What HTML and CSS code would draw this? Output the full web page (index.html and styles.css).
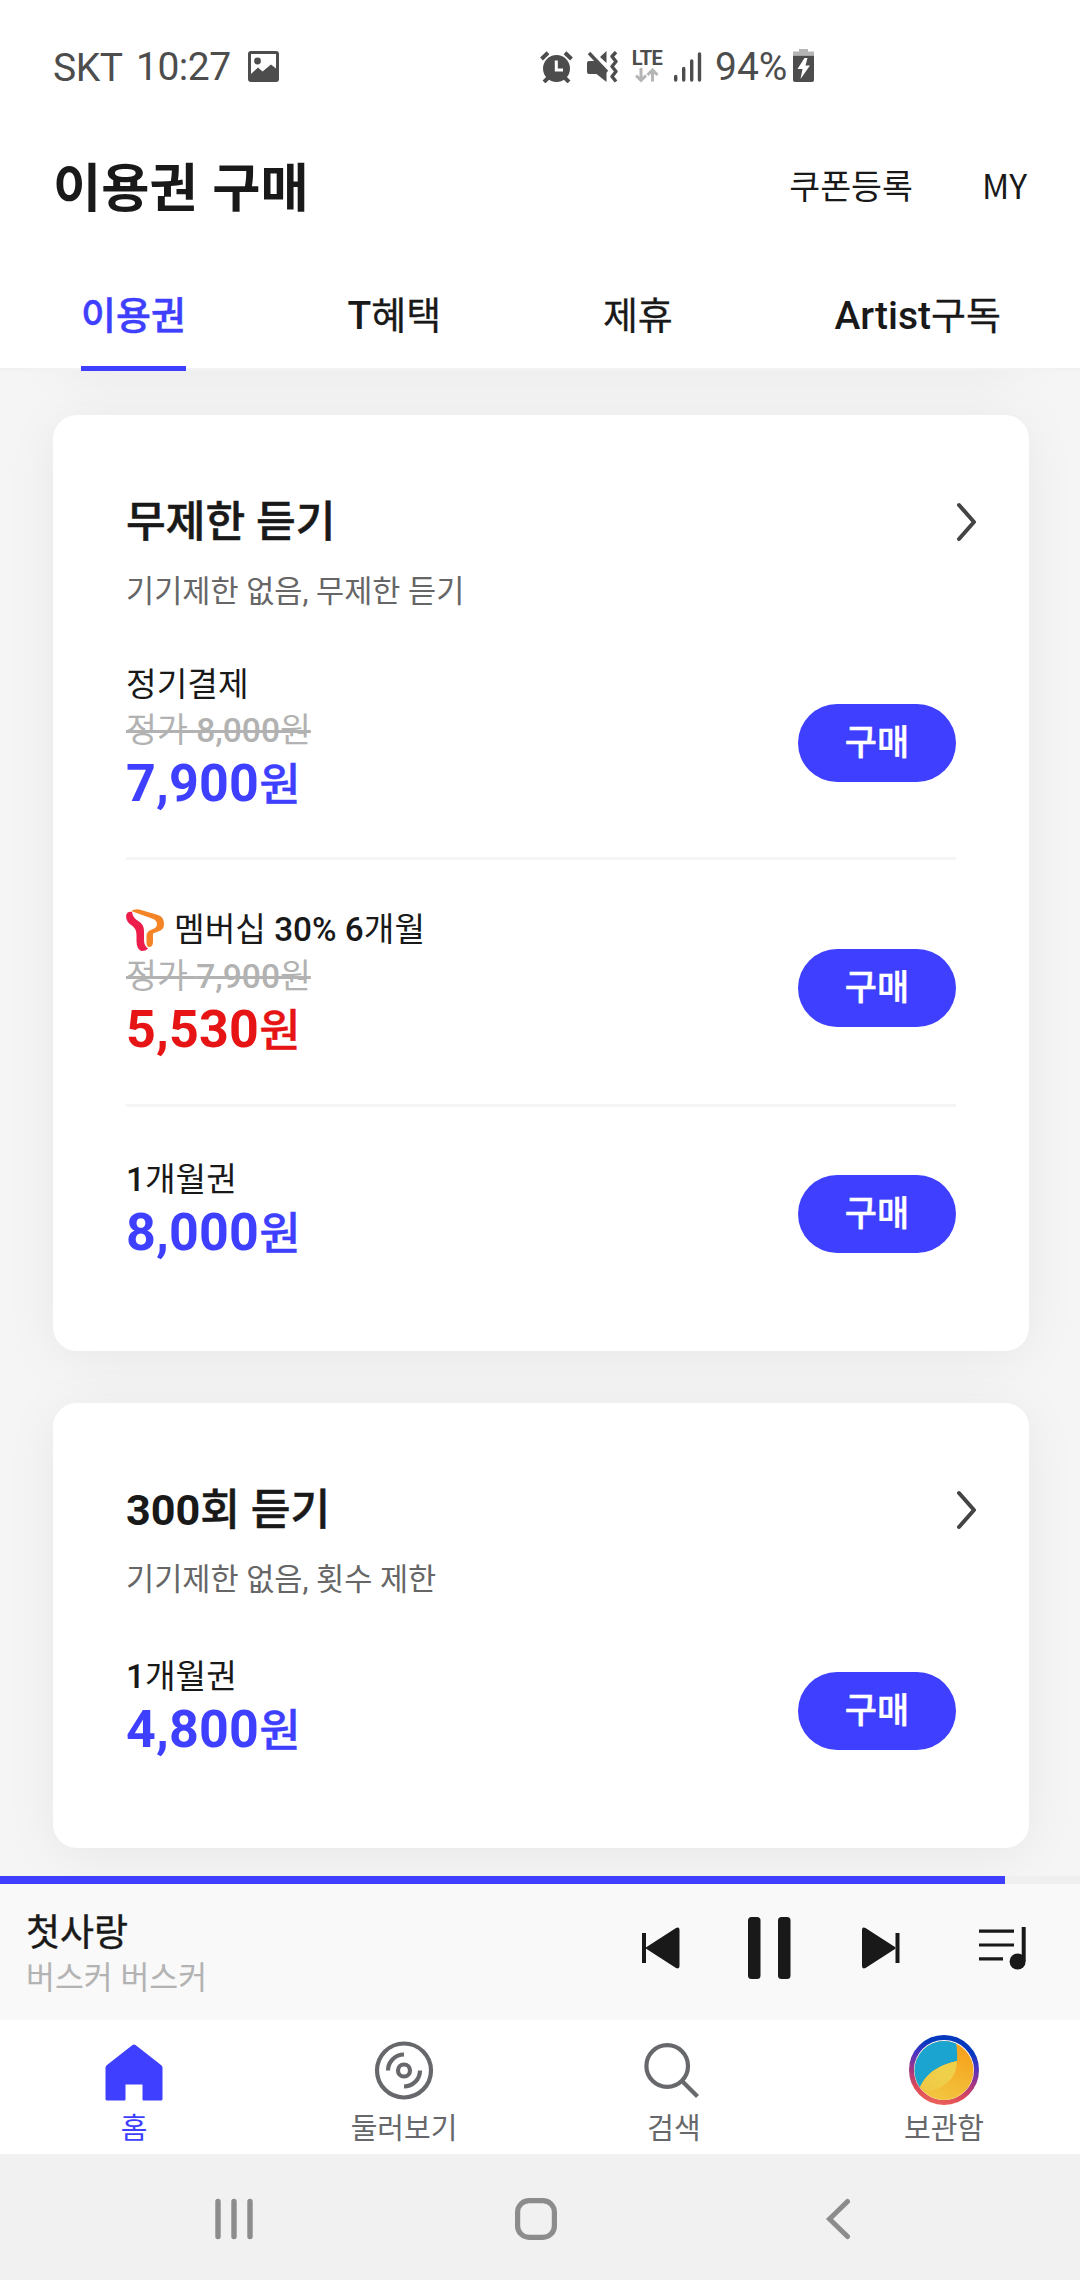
FILE: index.html
```html
<!DOCTYPE html>
<html lang="ko">
<head>
<meta charset="utf-8">
<title>이용권 구매</title>
<link rel="stylesheet" href="styles.css">
</head>
<body>
<div class="screen">
  <div class="status">
    <span class="status-text carrier">SKT</span>
    <span class="status-text clock">10:27</span>
    <svg class="ic-photo" width="32" height="31" viewBox="0 0 32 31"><path fill="#4d4d4d" fill-rule="evenodd" d="M3 0h25a3 3 0 0 1 3 3v25a3 3 0 0 1-3 3H3a3 3 0 0 1-3-3V3a3 3 0 0 1 3-3zM3 3v20l7-6.500 4.500 4L23 13.500l5 4V3z"/><circle cx="9.500" cy="10" r="3.400" fill="#4d4d4d"/></svg>
    <svg class="ic-alarm" width="34" height="32" viewBox="0 0 34 32"><g stroke="#4d4d4d" stroke-width="4" fill="none"><path d="M1.500 8L8 1.800M31.500 8L25 1.800M4 31l6-6M29 31l-6-6"/></g><circle cx="16.500" cy="17.500" r="13.500" fill="#4d4d4d"/><path d="M16.300 9.500v9.500h6.700" stroke="#fff" stroke-width="3" fill="none"/></svg>
    <svg class="ic-mute" width="32" height="32" viewBox="0 0 32 32"><g fill="#4d4d4d"><path d="M0 12q0-2 2-2h6L19.500 21V31L9.500 23H2q-2 0-2-2zM13 6l6.500-6v12z"/></g><path d="M2 2l18 19" stroke="#4d4d4d" stroke-width="3.400"/><path d="M29 1l-4 4.500 4 5-4 5 4 5-4 5 4 5" stroke="#4d4d4d" stroke-width="3.400" fill="none" stroke-linejoin="round"/></svg>
    <div class="lte"><span class="lte-text">LTE</span><svg width="24" height="15" viewBox="0 0 24 15"><path d="M6 0v12M1 7.500l5 5 5-5M17.500 13.500V2M12.500 7l5-5 5 5" stroke="#b5b5b5" stroke-width="3" fill="none"/></svg></div>
    <svg class="ic-signal" width="28" height="30" viewBox="0 0 28 30"><path d="M1.700 24.500v3.500M9.700 16.500v11.500M17.700 9v19M25.500 2v26" stroke="#4d4d4d" stroke-width="3.400" stroke-linecap="round"/></svg>
    <span class="status-text percent">94%</span>
    <svg class="ic-battery" width="22" height="34" viewBox="0 0 22 34"><path d="M6 0h9v2.500h6V6H0V2.500h6z" fill="#b5b5b5"/><path d="M0 6.500h21v24.500q0 2-2 2H2q-2 0-2-2z" fill="#4d4d4d"/><path d="M11.500 9L4.500 20h5L7.500 30 17 16.500h-4.500L14.500 9z" fill="#fff"/></svg>
  </div>
  <header class="header">
    <h1 class="title">이용권 구매</h1>
    <a class="link coupon">쿠폰등록</a>
    <a class="link">MY</a>
  </header>
  <nav class="tabs">
    <a class="tab active">이용권</a>
    <a class="tab"><span class="latin">T</span>혜택</a>
    <a class="tab">제휴</a>
    <a class="tab"><span class="latin">Artist</span>구독</a>
  </nav>
  <main class="list">
    <section class="card previous"></section>
    <section class="card unlimited">
      <div class="card-head"><h2 class="card-title">무제한 듣기</h2><svg class="chevron" width="22" height="40" viewBox="0 0 22 40"><path d="M3 3l15 17L3 37" fill="none" stroke="#444" stroke-width="4" stroke-linecap="round" stroke-linejoin="round"/></svg></div>
      <p class="desc">기기제한 없음, 무제한 듣기</p>
      <div class="plan first">
        <div class="info"><div class="label">정기결제</div><div class="was">정가 <span class="latin">8,000</span>원</div><div class="price">7,900<span class="won">원</span></div></div>
        <button class="buy">구매</button>
      </div>
      <div class="plan member">
        <div class="info"><div class="label"><svg class="t-logo" width="38" height="42" viewBox="0 0 38 42"><path d="M0 7Q1 2 6 3q1 6 5.500 8.500Q18 15 18 22v9q0 6 4 8.500-2 2.500-6.500 2.500-5-2-5-10v-6q0-6-4-9-6.500-4-6.500-10z" fill="#ec1c4b"/><path d="M5 2Q10-1 15 1l17 5q6 2 6 9 0 6-6 7.500l-5 2V33q0 5-4 5-2.500 0-2.500-5v-6q0-5 5.500-6.500 5-1.500 5-5.500 0-4-5-5.500z" fill="#f58426"/></svg><span>멤버십 <span class="latin">30% 6</span>개월</span></div><div class="was">정가 <span class="latin">7,900</span>원</div><div class="price sale">5,530<span class="won">원</span></div></div>
        <button class="buy">구매</button>
      </div>
      <div class="plan month">
        <div class="info"><div class="label"><span class="latin">1</span>개월권</div><div class="price">8,000<span class="won">원</span></div></div>
        <button class="buy">구매</button>
      </div>
    </section>
    <section class="card counted">
      <div class="card-head"><h2 class="card-title"><span class="count">300</span>회 듣기</h2><svg class="chevron" width="22" height="40" viewBox="0 0 22 40"><path d="M3 3l15 17L3 37" fill="none" stroke="#444" stroke-width="4" stroke-linecap="round" stroke-linejoin="round"/></svg></div>
      <p class="desc">기기제한 없음, 횟수 제한</p>
      <div class="plan single">
        <div class="info"><div class="label"><span class="latin">1</span>개월권</div><div class="price">4,800<span class="won">원</span></div></div>
        <button class="buy">구매</button>
      </div>
    </section>
  </main>
  <div class="progress"><div class="progress-fill"></div></div>
  <section class="player">
    <div class="track"><div class="song">첫사랑</div><div class="artist">버스커 버스커</div></div>
    <svg class="ic-prev" width="38" height="42" viewBox="0 0 38 42" fill="#191919"><path d="M0 6h4v30H0zM3 21L34 1q3.500-1.500 3.500 2v36q0 3.500-3.500 2z"/></svg>
    <svg class="ic-pause" width="43" height="62" viewBox="0 0 43 62" fill="#191919"><rect width="12.500" height="62" rx="3.500"/><rect x="30" width="12.500" height="62" rx="3.500"/></svg>
    <svg class="ic-next" width="38" height="42" viewBox="0 0 38 42" fill="#191919"><path d="M33.500 6h4v30h-4zM34.500 21L3.500 1Q0-.5 0 3v36q0 3.500 3.500 2z"/></svg>
    <svg class="ic-queue" width="47" height="43" viewBox="0 0 47 43"><path d="M0 4.200h35M0 18h35M0 31.800h24" stroke="#191919" stroke-width="3.200"/><path d="M44.700 0v34" stroke="#191919" stroke-width="4"/><circle cx="38.600" cy="34.500" r="8" fill="#191919"/></svg>
  </section>
  <nav class="bottom">
    <a class="item on"><svg width="70" height="70" viewBox="0 0 70 70"><path d="M33.500 10q1.500-1 3 0L62 30q1.500 1 1.500 2.500V64q0 1.500-1.500 1.500H44.500q-1 0-1-1V49.500h-17v15q0 1-1 1H8Q6.500 65.500 6.500 64V32.500Q6.500 31 8 30z" fill="#3f3fff"/></svg>홈</a>
    <a class="item"><svg width="70" height="70" viewBox="0 0 70 70"><g fill="none" stroke="#66686b" stroke-width="4.200"><circle cx="35" cy="35.500" r="27"/><circle cx="35" cy="35.500" r="6"/><path d="M19 35.500a16 16 0 0 1 16-16M51 35.500a16 16 0 0 1-16 16"/></g></svg>둘러보기</a>
    <a class="item"><svg width="70" height="70" viewBox="0 0 70 70"><g fill="none" stroke="#66686b" stroke-width="4.200"><circle cx="28.200" cy="31" r="20.800"/><path d="M43 46l15.500 15.500"/></g></svg>검색</a>
    <a class="item"><svg width="70" height="70" viewBox="0 0 70 70">
      <defs><linearGradient id="ring" x1=".62" y1="0" x2=".38" y2="1"><stop offset=".15" stop-color="#0438bd"/><stop offset=".35" stop-color="#4a33c4"/><stop offset=".6" stop-color="#a33584"/><stop offset=".85" stop-color="#de4a58"/><stop offset="1" stop-color="#e9605a"/></linearGradient><linearGradient id="gold" x1=".7" y1="0" x2=".3" y2="1"><stop offset=".2" stop-color="#f6a41f"/><stop offset="1" stop-color="#f1cb45"/></linearGradient><linearGradient id="leaf" x1="1" y1="0" x2="0" y2="1"><stop offset=".4" stop-color="#efd04a"/><stop offset="1" stop-color="#f1c644"/></linearGradient><clipPath id="face"><circle cx="35" cy="35.500" r="29.500"/></clipPath></defs>
      <circle cx="35" cy="35" r="32.500" fill="none" stroke="url(#ring)" stroke-width="5"/>
      <g clip-path="url(#face)"><path d="M0 0h70v70H0z" fill="url(#gold)"/><path d="M0 0h45q4 12 3 26Q20 32 11 52L0 60z" fill="#1ba4cf"/><path d="M48 26Q20 32 11 52l6 4q12 0 22-9 9-8 9-21z" fill="url(#leaf)"/></g>
    </svg>보관함</a>
  </nav>
  <nav class="system">
    <svg width="42" height="42" viewBox="0 0 42 42"><path d="M5 3.500v35M21 3.500v35M37 3.500v35" stroke="#8c8c8c" stroke-width="5.400" stroke-linecap="round"/></svg>
    <svg width="42" height="42" viewBox="0 0 42 42"><rect x="2.600" y="2.600" width="36.800" height="36.800" rx="11.500" fill="none" stroke="#8c8c8c" stroke-width="5.200"/></svg>
    <svg width="42" height="42" viewBox="0 0 42 42"><path d="M30.500 3.500L12.500 21l18 17.500" fill="none" stroke="#8c8c8c" stroke-width="5" stroke-linecap="round"/></svg>
  </nav>
</div>
</body>
</html>
```
FILE: styles.css
```css
* { box-sizing: border-box; margin: 0; padding: 0; }
body { width: 1080px; height: 2280px; overflow: hidden; background: #fff; color: #191919; font-family: Roboto, "Noto Sans CJK KR", sans-serif; }
svg { display: block; flex: none; }
.screen { display: flex; flex-direction: column; height: 2280px; }

.status { display: flex; align-items: flex-start; height: 135px; padding: 0 53px; }
.status-text { color: #4d4d4d; font-size: 39px; line-height: 46px; white-space: nowrap; margin-top: 44px; font-weight: 400; }
.carrier { width: 83px; margin-top: 45px; letter-spacing: -0.5px; }
.clock { width: 112px; letter-spacing: -0.5px; }
.ic-photo { margin-top: 51px; }
.ic-alarm { margin: 51px 0 0 260px; }
.ic-mute { margin: 51px 0 0 13px; }
.lte { display: flex; flex-direction: column; align-items: center; width: 32px; margin: 49px 0 0 12px; }
.lte-text { font-size: 20px; line-height: 19px; font-weight: 700; color: #4d4d4d; letter-spacing: -0.5px; }
.ic-signal { margin: 52px 0 0 11px; }
.percent { width: 78px; margin-left: 13px; }
.ic-battery { margin-top: 49px; }

.header { display: flex; align-items: center; height: 104px; padding: 0 53px 4px; font-family: "Noto Sans CJK KR", sans-serif; }
.title { flex: 1; font-size: 52.400px; font-weight: 700; line-height: 70px; padding-bottom: 2px; }
.link { font-size: 33.600px; line-height: 48px; }
.coupon { margin-right: 69px; }

.tabs { display: flex; justify-content: space-between; height: 132px; padding: 49px 79px 0 81px; border-bottom: 3px solid #f2f2f2; position: relative; z-index: 1; background: #fff; }
.tab { font-size: 38px; font-weight: 400; line-height: 56px; height: 83px; -webkit-text-stroke: 0.3px; }
.tab.active { color: #3f3fff; border-bottom: 5px solid #3f3fff; font-weight: 500; -webkit-text-stroke: 0.5px; }
.latin { font-weight: 500; -webkit-text-stroke: 0; }
.tab .latin { font-size: 39px; }

.list { height: 1505px; overflow: hidden; background: #f5f5f5; padding: 0 51px 0 53px; }
.card { background: #fff; border-radius: 24px; box-shadow: 0 6px 54px rgba(0, 0, 0, 0.06); position: relative; }
.previous { height: 200px; margin-top: -208px; margin-bottom: 52px; }
.unlimited { height: 936px; margin-bottom: 52px; padding: 78px 73px 0; }
.counted { height: 445px; padding: 78px 73px 0; }
.card-head { display: flex; justify-content: space-between; align-items: center; height: 60px; margin-right: -22px; }
.chevron { margin-bottom: 2px; }
.card-title { font-size: 43.200px; line-height: 60px; font-weight: 500; -webkit-text-stroke: 0.5px; }
.count { font-weight: 700; -webkit-text-stroke: 0; }
.desc { margin-top: 17px; font-size: 30.600px; line-height: 44px; color: #666; }
.plan { display: flex; justify-content: space-between; align-items: center; }
.first { margin-top: 47px; height: 199px; padding-bottom: 33px; border-bottom: 3px solid #f5f5f5; }
.member { height: 247px; padding: 44px 0 33px; border-bottom: 3px solid #f5f5f5; }
.month { height: 166px; padding-top: 48px; }
.single { margin-top: 50px; height: 118px; }
.info { padding-bottom: 9px; }
.label { display: flex; align-items: center; height: 46px; font-size: 33.300px; line-height: 46px; font-weight: 400; }
.member .label { height: 48px; }
.t-logo { margin-right: 10px; }
.was { font-size: 33.600px; line-height: 46px; font-weight: 400; color: #b2b2b2; text-decoration: line-through; text-decoration-thickness: 3px; }
.price { height: 60px; line-height: 60px; font-size: 52px; font-weight: 700; color: #3f3fff; letter-spacing: 0.2px; }
.sale { color: #e61414; }
.won { font-size: 45px; font-weight: 500; -webkit-text-stroke: 0.4px; }
.buy { width: 158px; height: 78px; border: 0; border-radius: 39px; background: #3f3fff; color: #fff; font: 500 35px/78px Roboto, "Noto Sans CJK KR", sans-serif; padding-top: 1px; -webkit-text-stroke: 0.4px; }

.progress { height: 8px; background: #efefef; }
.progress-fill { width: 1005px; height: 8px; background: #3f3fff; }
.player { display: flex; align-items: center; height: 136px; background: #f9f9f9; padding: 0 54px 8px 26px; }
.track { flex: 1; padding-top: 14px; }
.song { font-size: 37px; line-height: 48px; font-weight: 400; -webkit-text-stroke: 0.4px; }
.artist { font-size: 31.400px; line-height: 42px; color: #b3b3b3; }
.ic-prev { margin-right: 68px; }
.ic-pause { margin-right: 71px; }
.ic-next { margin-right: 79px; }

.bottom { display: flex; height: 134px; padding-top: 15px; margin-left: -1px; }
.item { display: flex; flex-direction: column; align-items: center; width: 270px; font-size: 29px; line-height: 48px; color: #66686b; }
.item.on { color: #3f3fff; }
.system { display: flex; justify-content: center; align-items: center; gap: 260px; height: 126px; padding: 4px 8px 0 0; background: #f1f1f1; }
```
